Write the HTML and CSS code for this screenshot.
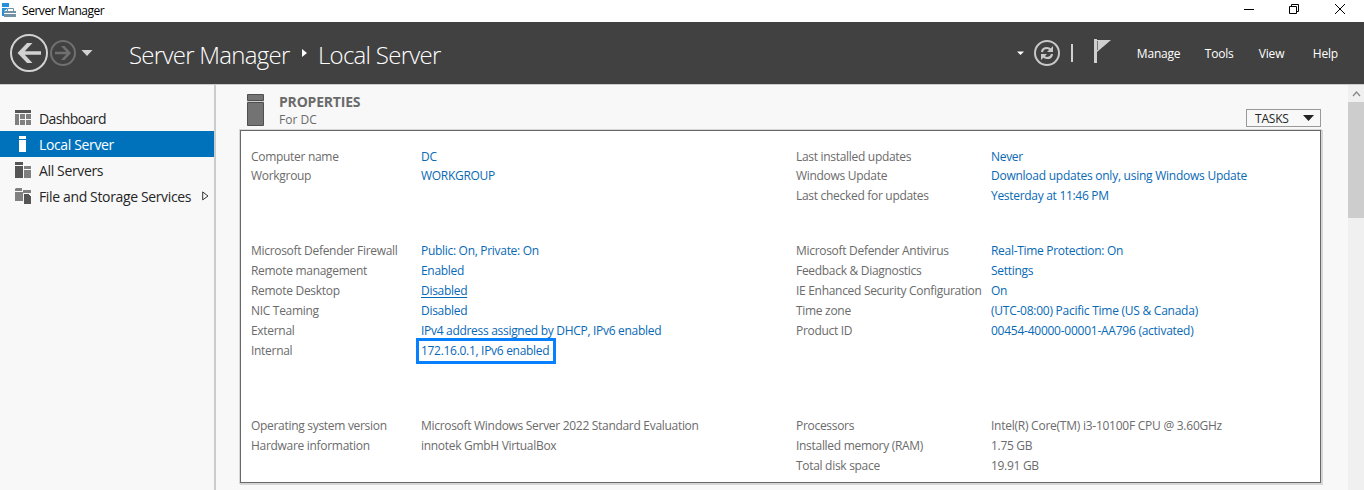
FILE: index.html
```html
<!DOCTYPE html>
<html lang="en">
<head>
<meta charset="utf-8">
<title>Server Manager</title>
<link rel="stylesheet" href="styles.css">
</head>
<body>
<header class="titlebar">
  <svg class="app-icon" width="15" height="15" viewBox="0 0 15 15"><path fill="#2490dc" d="M0 1h7v4H0zM0 6h5v1L2 9v5H0z"/><path fill="#7292a5" fill-rule="evenodd" d="M2 9h3V7q0-1 1-1h5q1 0 1 1v2h2v2H2zM6 7v2h5V7zM2 12h12v3H2z"/></svg>
  <span class="app-name">Server Manager</span>
  <svg class="window-buttons" width="104" height="22" viewBox="0 0 104 22" fill="none" stroke="#000"><path d="M0 9.500h10M45.500 6.500h7v7h-7zM47.500 6V4.500h7v7H53M91 4l10 10M101 4L91 14"/></svg>
</header>
<nav class="banner">
  <svg class="history" width="84" height="40" viewBox="0 0 84 40" fill="none"><circle cx="20" cy="20" r="18" stroke="#d2d2d2" stroke-width="2"/><path fill="#d2d2d2" d="M8.500 20 18 10h5.500l-7.700 8.200H32v3.600H15.800L23.500 30H18z"/><circle cx="54" cy="20" r="12" stroke="#707070" stroke-width="2"/><path fill="#707070" d="M62 20l-6.500-7H52l5.300 5.700H46v2.600h11.300L52 27h3.500z"/><path fill="#d2d2d2" d="M72.500 17h11L78 23z"/></svg>
  <h1 class="crumbs"><span class="crumb-root">Server Manager</span><svg class="crumb-arrow" width="5" height="8" viewBox="0 0 5 8"><path fill="#fff" d="M0 0l5 4-5 4z"/></svg><span class="crumb-page">Local Server</span></h1>
  <svg class="tools" width="96" height="40" viewBox="0 0 96 40" fill="none"><path fill="#fff" d="M1 18.500h7L4.500 22z"/><circle cx="31" cy="20" r="12" stroke="#c8c8c8" stroke-width="2"/><path stroke="#c8c8c8" stroke-width="2.200" d="M26 19q.5-4 5-4 2 0 4 2M36 21q-.5 4-5 4-2 0-4-2"/><path fill="#c8c8c8" d="M37 13v6h-6zM25 27v-6h6z"/><path fill="#d0d0d0" d="M55 11h2v18h-2zM78 6h3v24h-3zM81 7h14L81 19z"/><path stroke="#777" d="M81.500 8v9"/></svg>
  <span class="menu manage">Manage</span><span class="menu tools-menu">Tools</span><span class="menu view">View</span><span class="menu">Help</span>
</nav>
<div class="workspace">
  <aside class="sidebar">
    <div class="item"><svg width="16" height="16" viewBox="0 0 16 16"><path fill="#555" d="M0 0h16v3H0z"/><path fill="#808080" d="M0 4h4v11H0zM5 4h5v5H5zM11 4h5v5h-5zM5 10h5v5H5zM11 10h5v5h-5z"/></svg><span class="dashboard">Dashboard</span></div>
    <div class="item selected"><svg width="16" height="16" viewBox="0 0 16 16"><path fill="#fff" d="M4 0h7v3H4zM4 4h7v12H4z"/></svg><span class="local">Local Server</span></div>
    <div class="item"><svg width="16" height="16" viewBox="0 0 16 16"><path fill="#555" d="M0 0h8v3H0zM0 4h8v12H0z"/><path fill="#808080" d="M9 4h7v3H9zM9 8h7v8H9z"/></svg><span class="all">All Servers</span></div>
    <div class="item"><svg width="16" height="16" viewBox="0 0 16 16"><path fill="#808080" d="M0 1l1-1h6v3H0zM0 4h8v9H0zM8 2h8v3H8z"/><path fill="#555" stroke="#f8f8f8" d="M8.500 5.500h5l3 3v8h-8z"/></svg><span class="storage">File and Storage Services</span><svg class="expand" width="7" height="10" viewBox="0 0 7 10"><path fill="none" stroke="#333" d="M.7.900v8L6 5z"/></svg></div>
  </aside>
  <main class="content">
    <div class="section-head">
      <svg width="17" height="32" viewBox="0 0 17 32"><path fill="#737373" stroke="#4f4f4f" d="M.5.500h16v6H.5zM.5 8.500h16v23H.5z"/><path stroke="#ccc" d="M0 7.500h17"/></svg>
      <div class="heading"><h2>PROPERTIES</h2><p>For DC</p></div>
      <button class="tasks"><span>TASKS</span><svg width="11" height="6" viewBox="0 0 11 6"><path fill="#222" d="M0 0h11L5.500 6z"/></svg></button>
    </div>
    <section class="panel">
      <div class="group first">
        <dl><dt>Computer name</dt><dd class="link">DC</dd><dt>Workgroup</dt><dd class="link">WORKGROUP</dd></dl>
        <dl><dt>Last installed updates</dt><dd class="link">Never</dd><dt>Windows Update</dt><dd class="link wide">Download updates only, using Windows Update</dd><dt>Last checked for updates</dt><dd class="link">Yesterday at 11:46 PM</dd></dl>
      </div>
      <div class="group second">
        <dl><dt>Microsoft Defender Firewall</dt><dd class="link">Public: On, Private: On</dd><dt>Remote management</dt><dd class="link">Enabled</dd><dt>Remote Desktop</dt><dd class="link underlined">Disabled</dd><dt>NIC Teaming</dt><dd class="link">Disabled</dd><dt>External</dt><dd class="link">IPv4 address assigned by DHCP, IPv6 enabled</dd><dt>Internal</dt><dd class="link"><span class="highlight">172.16.0.1, IPv6 enabled</span></dd></dl>
        <dl><dt>Microsoft Defender Antivirus</dt><dd class="link">Real-Time Protection: On</dd><dt>Feedback &amp; Diagnostics</dt><dd class="link">Settings</dd><dt>IE Enhanced Security Configuration</dt><dd class="link">On</dd><dt>Time zone</dt><dd class="link wide">(UTC-08:00) Pacific Time (US &amp; Canada)</dd><dt>Product ID</dt><dd class="link wide">00454-40000-00001-AA796 (activated)</dd></dl>
      </div>
      <div class="group">
        <dl><dt>Operating system version</dt><dd>Microsoft Windows Server 2022 Standard Evaluation</dd><dt>Hardware information</dt><dd>innotek GmbH VirtualBox</dd></dl>
        <dl><dt>Processors</dt><dd class="wide">Intel(R) Core(TM) i3-10100F CPU @ 3.60GHz</dd><dt>Installed memory (RAM)</dt><dd>1.75 GB</dd><dt>Total disk space</dt><dd>19.91 GB</dd></dl>
      </div>
    </section>
  </main>
  <div class="scrollbar"><svg width="16" height="17" viewBox="0 0 16 17"><path fill="none" stroke="#888" stroke-width="1.300" d="M5 11l3.500-4 3.500 4"/></svg><div class="thumb"></div></div>
</div>
</body>
</html>
```
FILE: styles.css
```css
* { box-sizing: border-box; }
body { margin: 0; height: 490px; overflow: hidden; display: flex; flex-direction: column; background: #f8f8f8; color: #262626; font: 12px "Open Sans", "Noto Sans", sans-serif; white-space: nowrap; }
h1, h2, p, dl, dd { margin: 0; font-weight: 400; }
svg { display: block; flex: none; }
.titlebar { height: 22px; flex: none; display: flex; align-items: flex-start; background: #fff; color: #000; padding-left: 2px; }
.app-icon { margin-top: 2px; }
.app-name { margin-left: 5px; line-height: 22px; letter-spacing: -.45px; }
.window-buttons { margin: 0 16px 0 auto; }
.banner { height: 62px; flex: none; display: flex; align-items: center; background: #414141; color: #fff; padding: 0 26px 0 9px; }
.crumbs { display: flex; align-items: center; margin-left: 36px; font-size: 24px; font-weight: 300; line-height: 34px; padding-top: 3px; }
.crumb-root { width: 173px; letter-spacing: -.72px; }
.crumb-page { letter-spacing: -.72px; }
.crumb-arrow { margin: 0 11px 4px 0; }
.tools { margin-left: auto; }
.menu { padding-top: 1px; letter-spacing: -.2px; }
.manage { margin-left: 25px; width: 68px; }
.tools-menu { width: 54px; }
.view { width: 54px; }
.workspace { flex: 1; min-height: 0; display: flex; border-top: 1px solid #ccc; }
.sidebar { width: 216px; flex: none; border-right: 2px solid #ccc; padding-top: 20px; }
.item { height: 26px; display: flex; align-items: center; gap: 8px; padding-left: 15px; font-size: 14px; letter-spacing: -.36px; }
.item span { padding-top: 1px; }
.dashboard { letter-spacing: -.6px; }
.selected { background: #0072bc; color: #fff; }
.item .expand { margin-left: 3px; }
.content { flex: 1; min-width: 0; padding: 9px 27px 0 24px; }
.section-head { display: flex; height: 36px; padding-left: 7px; }
.heading { margin-left: 15px; color: #6a6a6a; }
.heading h2 { font-size: 14px; font-weight: 700; line-height: 16px; letter-spacing: -.2px; }
.heading p { line-height: 19px; }
.tasks { margin: 15px 0 0 auto; width: 75px; height: 18px; padding: 0 6px 0 8px; border: 1px solid #999; background: #f8f8f8; color: #262626; font: inherit; letter-spacing: -.2px; display: flex; align-items: center; justify-content: space-between; }
.panel { height: 353px; width: 1081px; border: 1px solid #686868; background: #fff; box-shadow: 1px 1px 0 1px #d6d6d6, 0 0 0 1px #d6d6d6; padding: 16px 0 0 10px; color: #6b6b6b; letter-spacing: -.3px; }
.group { display: grid; grid-template-columns: 545px 1fr; align-items: start; }
.group dl { display: grid; grid-template-columns: 170px 1fr; line-height: 20px; }
.group dl:last-child { grid-template-columns: 195px 1fr; }
.first { height: 94px; }
.first dl { grid-template-rows: 19px 20px 20px; }
.second { height: 175px; }
.link { color: #0869b5; }
.wide { letter-spacing: -.25px; }
.underlined { text-decoration: underline; text-underline-offset: 2px; }
.highlight { display: inline-block; width: 130px; outline: 3px solid #0780ff; outline-offset: 2px; line-height: 16px; }
.scrollbar { width: 16px; flex: none; background: #f0f0f0; }
.thumb { height: 116px; background: #cdcdcd; }
```
